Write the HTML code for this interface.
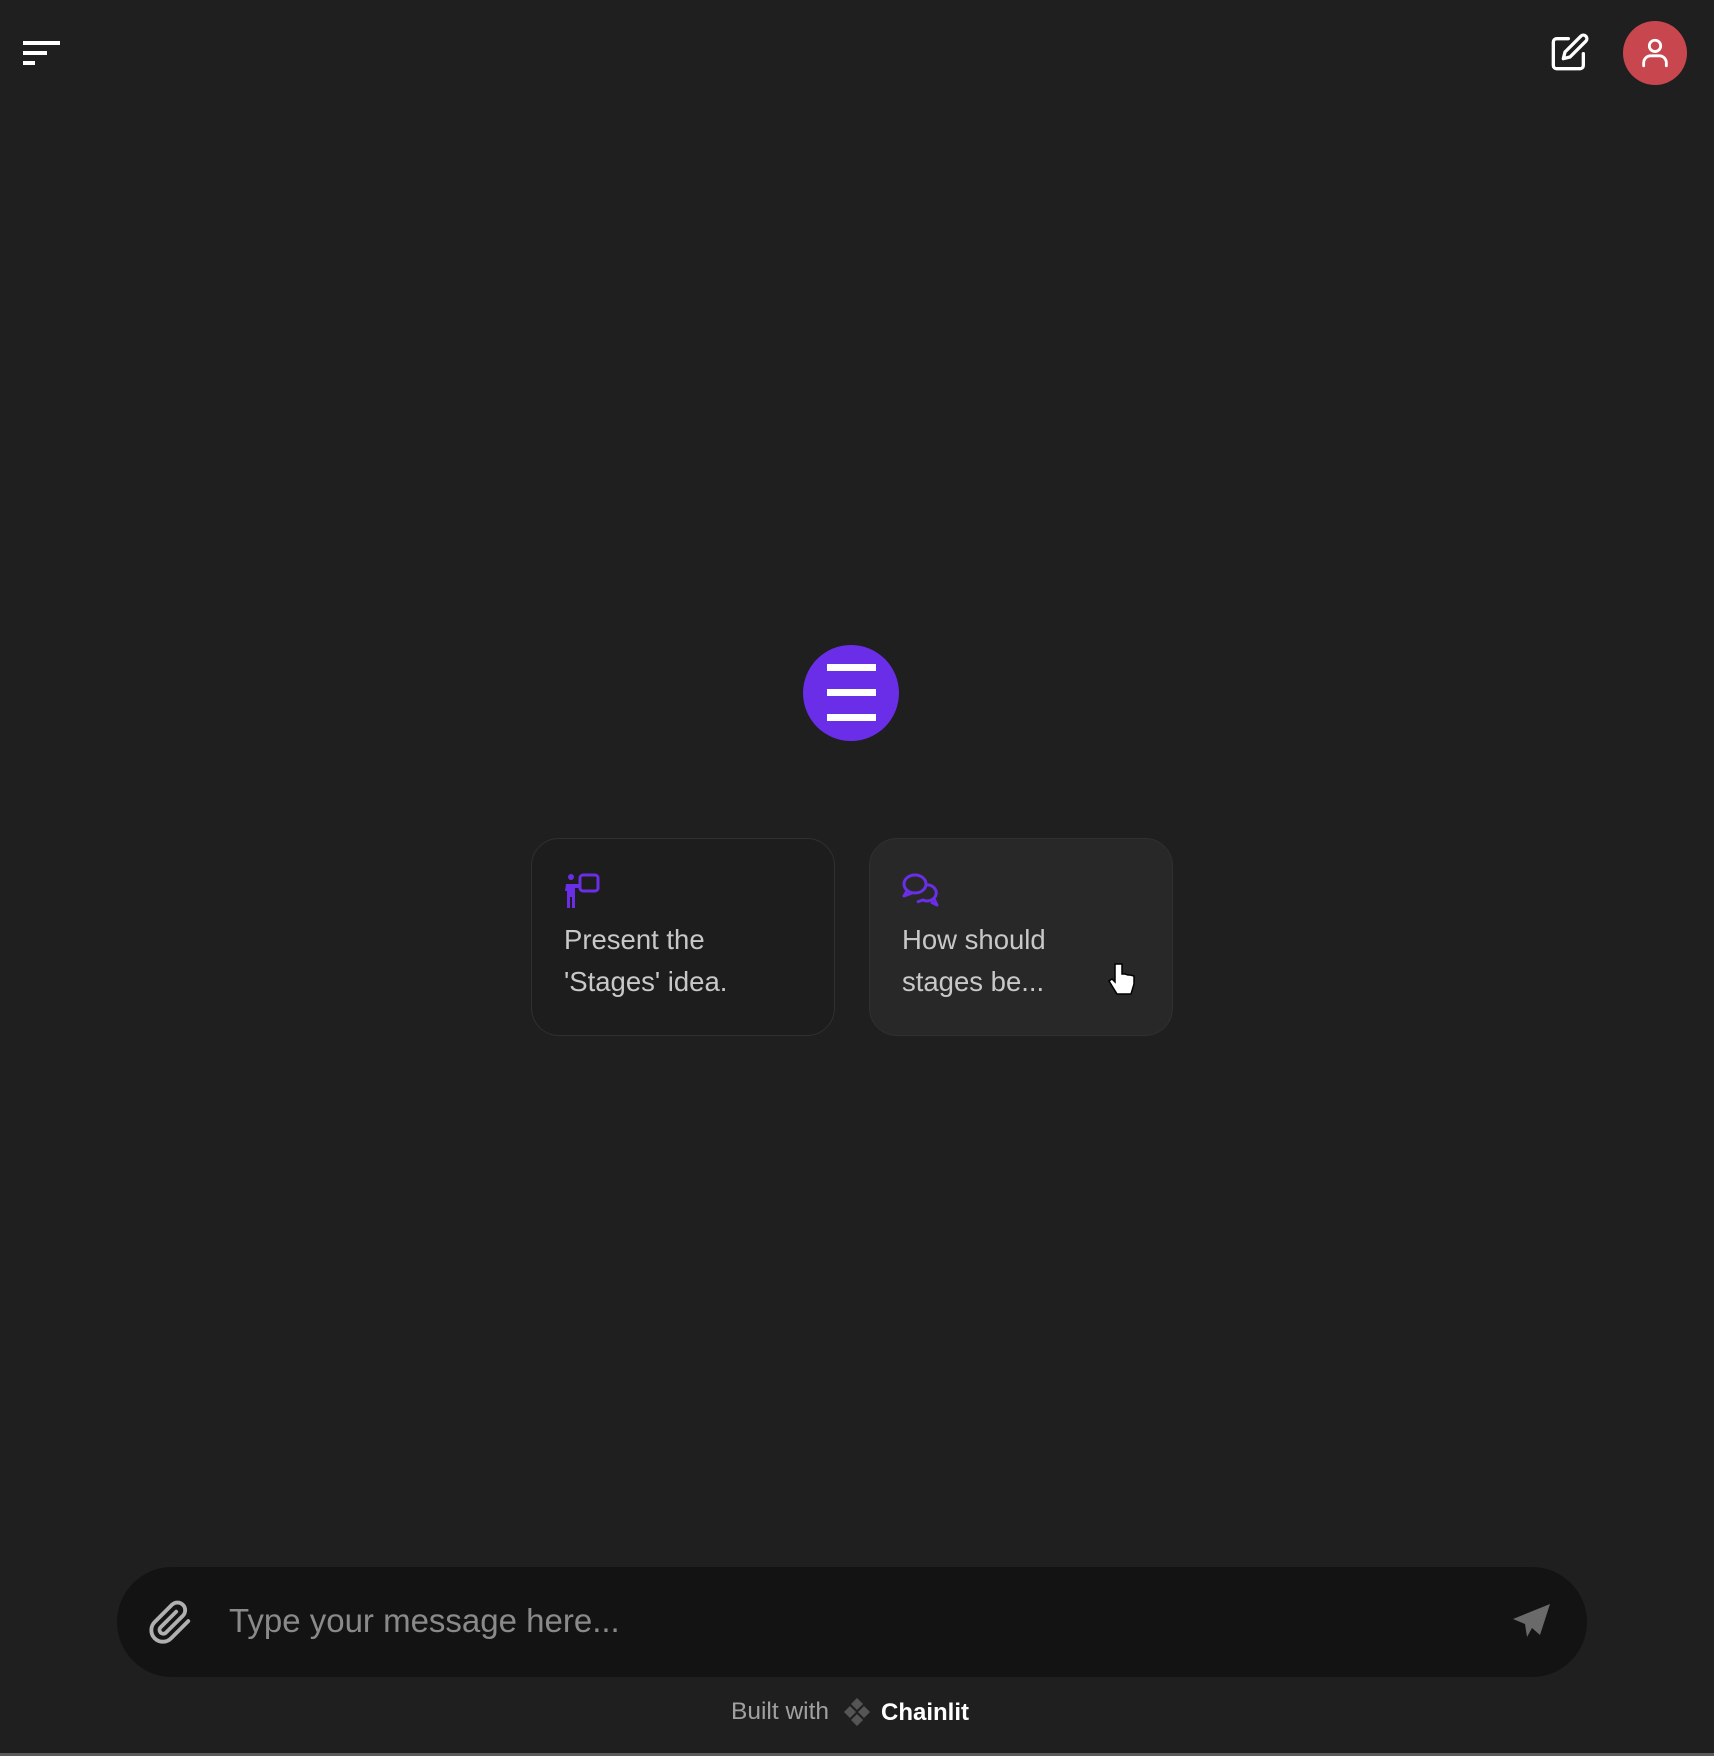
<!DOCTYPE html>
<html><head><style>
html,body{margin:0;padding:0;}
body{width:1714px;height:1756px;background:#1f1f1f;position:relative;overflow:hidden;font-family:"Liberation Sans",sans-serif;}
.abs{position:absolute;}
.card{position:absolute;top:838px;width:304px;height:198px;border:1.5px solid #303030;border-radius:28px;box-sizing:border-box;}
.card .t{position:absolute;left:32px;top:80px;font-size:27.5px;line-height:42px;color:#c8c8c8;}
</style></head><body>
<svg class="abs" style="left:22px;top:38px" width="40" height="30" viewBox="0 0 40 30">
<rect x="1" y="3" width="37" height="4" fill="#fff"/><rect x="1" y="13" width="24" height="4" fill="#fff"/><rect x="1" y="23" width="12" height="4" fill="#fff"/></svg>
<svg class="abs" style="left:1550px;top:32px" width="40" height="40" viewBox="0 0 24 24" fill="none" stroke="#fff" stroke-width="2" stroke-linecap="round" stroke-linejoin="round">
<path d="M11 4H4a2 2 0 0 0-2 2v14a2 2 0 0 0 2 2h14a2 2 0 0 0 2-2v-7"/><path d="M18.5 2.5a2.1 2.1 0 0 1 3 3L12 15l-4 1 1-4 9.5-9.5z"/></svg>
<div class="abs" style="left:1623px;top:21px;width:64px;height:64px;border-radius:50%;background:#c8474f;"></div>
<svg class="abs" style="left:1638px;top:36px" width="34" height="34" viewBox="0 0 24 24" fill="none" stroke="#fff" stroke-width="2" stroke-linecap="round"><circle cx="12" cy="7" r="4"/><path d="M4 21v-2a5 5 0 0 1 5-5h6a5 5 0 0 1 5 5v2"/></svg>
<div class="abs" style="left:803px;top:645px;width:96px;height:96px;border-radius:50%;background:#6a2ee8;"></div>
<div class="abs" style="left:827px;top:664px;width:49px;height:7px;background:#fff"></div>
<div class="abs" style="left:827px;top:689px;width:49px;height:7px;background:#fff"></div>
<div class="abs" style="left:827px;top:714px;width:49px;height:7px;background:#fff"></div>
<div class="card" style="left:531px;background:#1d1d1d">
<svg class="abs" style="left:32px;top:34px" width="40" height="36" viewBox="0 0 40 36" fill="#6a2ee8"><circle cx="7" cy="4" r="3"/><path d="M2 11h14v4H11v20H8V24H6v11H3V18H1z"/><rect x="16" y="2" width="18" height="16" rx="3" fill="none" stroke="#6a2ee8" stroke-width="3"/></svg>
<div class="t">Present the<br>'Stages' idea.</div></div>
<div class="card" style="left:869px;background:#282828">
<svg class="abs" style="left:32px;top:34px" width="42" height="36" viewBox="0 0 42 36" fill="none" stroke="#6a2ee8" stroke-width="3" stroke-linejoin="round"><ellipse cx="13" cy="11" rx="11" ry="9"/><path d="M5 18l-3 5 8-3"/><path d="M24 12a9 8 0 1 1-3 15l-6 2"/><path d="M32 26l3 6-6-3"/></svg>
<div class="t">How should<br>stages be...</div></div>
<svg class="abs" style="left:1108px;top:962px" width="28" height="34" viewBox="0 0 28 34"><path d="M7 2v18l-3-3-3 2 8 13h14l3-10V14l-4-1-2 0-3-1-3 0V2z" fill="#fff" stroke="#000" stroke-width="1.5"/></svg>
<div class="abs" style="left:117px;top:1567px;width:1470px;height:110px;border-radius:55px;background:#131313;"></div>
<svg class="abs" style="left:148px;top:1600px" width="46" height="46" viewBox="0 0 24 24" fill="none" stroke="#b0b0b0" stroke-width="2" stroke-linecap="round"><path d="M21 11l-9 9a6 6 0 0 1-8.5-8.5l9-9a4 4 0 0 1 5.7 5.7l-9 9a2 2 0 0 1-2.8-2.8l8.3-8.3"/></svg>
<div class="abs" style="left:229px;top:1601px;font-size:33px;line-height:40px;color:#8a8a8a;">Type your message here...</div>
<svg class="abs" style="left:1512px;top:1603px" width="40" height="36" viewBox="0 0 40 36"><path d="M38 1L1 16l12 5 2 13 5-9 8 7z" fill="#6a6a6a"/></svg>
<div class="abs" style="left:731px;top:1697px;font-size:24.5px;line-height:30px;color:#a0a0a0;">Built with</div>
<svg class="abs" style="left:842px;top:1697px" width="30" height="30" viewBox="0 0 30 30" fill="#555"><path d="M15 1l6 6-6 6-6-6z"/><path d="M8 9l6 6-6 6-6-6z"/><path d="M22 9l6 6-6 6-6-6z"/><path d="M15 17l6 6-6 6-6-6z"/></svg>
<div class="abs" style="left:881px;top:1698px;font-size:24px;line-height:30px;color:#fff;font-weight:bold;">Chainlit</div>
<div class="abs" style="left:0;top:1753px;width:1714px;height:3px;background:#5a5a5a"></div>
</body></html>
